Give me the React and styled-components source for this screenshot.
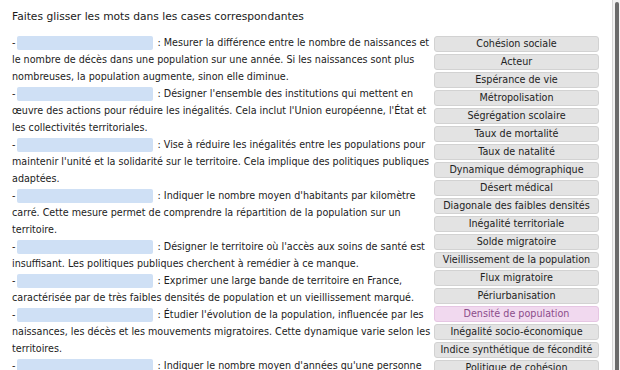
import React from "react";
import styled, { createGlobalStyle } from "styled-components";

const GlobalStyle = createGlobalStyle`
  html, body {
    margin: 0;
    padding: 0;
    background: #fff;
  }
`;

const Page = styled.div`
  display: flex;
  height: 370px;
  overflow: hidden;
  font-family: "DejaVu Sans", sans-serif;
  color: #1c1c1c;
`;

const Content = styled.div`
  flex: 1;
  min-width: 0;
  padding: 10px 12px 20px;
`;

const Rail = styled.div`
  width: 8px;
  flex-shrink: 0;
  box-sizing: border-box;
  padding: 2px 1px 0 2px;
  background: #f2f2f2;
  border-left: 1px solid #d6d6d6;
`;

const Thumb = styled.div`
  height: 380px;
  background: #6b6b6b;
  border-radius: 3px;
`;

const Title = styled.h1`
  margin: 0 0 10px;
  font-size: 10.7px;
  line-height: 14px;
  font-weight: normal;
  color: #1a1a1a;
`;

const Columns = styled.div`
  display: flex;
  align-items: flex-start;
  gap: 2px;
`;

const Definitions = styled.div`
  width: 420px;
  font-size: 9.6px;
  line-height: 17px;
`;

const Definition = styled.div``;

const Blank = styled.span`
  display: inline-block;
  width: 136px;
  height: 14px;
  margin: 0 1px 0 2px;
  vertical-align: -4px;
  background: #cfe0f5;
  border-radius: 2px;
`;

const Bank = styled.div`
  width: 165px;
  margin-top: 2px;
  display: flex;
  flex-direction: column;
  gap: 2px;
`;

const Word = styled.div`
  box-sizing: border-box;
  height: 16px;
  line-height: 14px;
  text-align: center;
  font-size: 9.6px;
  white-space: nowrap;
  border-radius: 3px;
  border: 1px solid ${(p) => (p.$active ? "#e6c6e3" : "#d2d2d2")};
  background: ${(p) => (p.$active ? "#f1d9ef" : "#e3e3e3")};
  color: ${(p) => (p.$active ? "#8b4c8a" : "#222")};
`;

const definitions = [
  "Mesurer la différence entre le nombre de naissances et le nombre de décès dans une population sur une année. Si les naissances sont plus nombreuses, la population augmente, sinon elle diminue.",
  "Désigner l'ensemble des institutions qui mettent en œuvre des actions pour réduire les inégalités. Cela inclut l'Union européenne, l'État et les collectivités territoriales.",
  "Vise à réduire les inégalités entre les populations pour maintenir l'unité et la solidarité sur le territoire. Cela implique des politiques publiques adaptées.",
  "Indiquer le nombre moyen d'habitants par kilomètre carré. Cette mesure permet de comprendre la répartition de la population sur un territoire.",
  "Désigner le territoire où l'accès aux soins de santé est insuffisant. Les politiques publiques cherchent à remédier à ce manque.",
  "Exprimer une large bande de territoire en France, caractérisée par de très faibles densités de population et un vieillissement marqué.",
  "Étudier l'évolution de la population, influencée par les naissances, les décès et les mouvements migratoires. Cette dynamique varie selon les territoires.",
  "Indiquer le nombre moyen d'années qu'une personne peut espérer vivre à sa naissance.",
];

const words = [
  "Cohésion sociale",
  "Acteur",
  "Espérance de vie",
  "Métropolisation",
  "Ségrégation scolaire",
  "Taux de mortalité",
  "Taux de natalité",
  "Dynamique démographique",
  "Désert médical",
  "Diagonale des faibles densités",
  "Inégalité territoriale",
  "Solde migratoire",
  "Vieillissement de la population",
  "Flux migratoire",
  "Périurbanisation",
  "Densité de population",
  "Inégalité socio-économique",
  "Indice synthétique de fécondité",
  "Politique de cohésion",
];

export default function App() {
  return (
    <>
      <GlobalStyle />
      <Page>
        <Content>
          <Title>Faites glisser les mots dans les cases correspondantes</Title>
          <Columns>
            <Definitions>
              {definitions.map((text, i) => (
                <Definition key={i}>
                  -<Blank /> : {text}
                </Definition>
              ))}
            </Definitions>
            <Bank>
              {words.map((w) => (
                <Word key={w} $active={w === "Densité de population"}>
                  {w}
                </Word>
              ))}
            </Bank>
          </Columns>
        </Content>
        <Rail>
          <Thumb />
        </Rail>
      </Page>
    </>
  );
}
